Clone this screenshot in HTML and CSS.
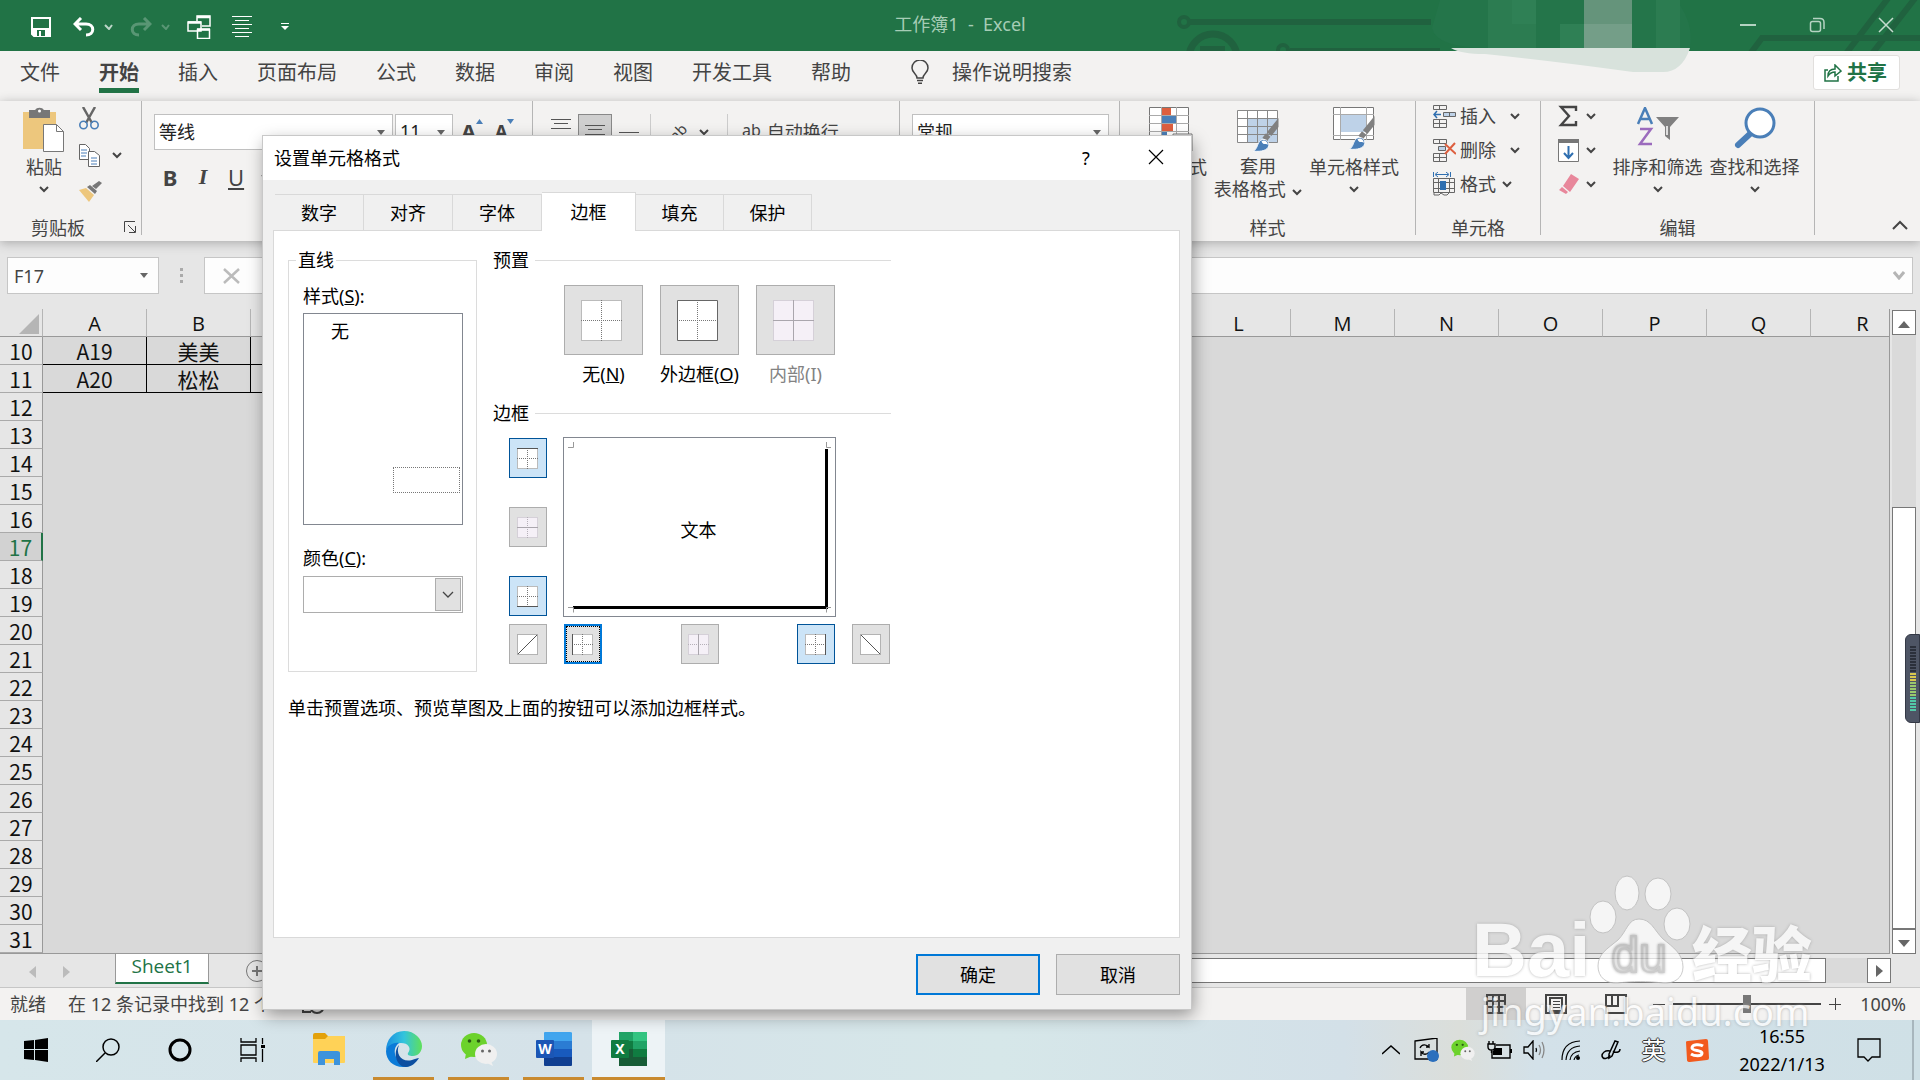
FILE: index.html
```html
<!DOCTYPE html>
<html lang="zh-CN">
  <head>
    <meta charset="utf-8" />
    <title>工作簿1 - Excel</title>
    <link rel="stylesheet" href="styles.css">
  </head>
  <body>
    <svg class="defs" width="0" height="0">
      <symbol id="chev" viewBox="0 0 10 7"><path d="M1 1l4 4 4-4" fill="none" stroke="#444" stroke-width="2"/></symbol>
      <symbol id="brush" viewBox="0 0 28 38">
        <path d="M28 0v10l-8 10-5-4z" fill="#808080"/>
        <path d="M14 17l5 4-4 5-5-4z" fill="#808080"/>
        <path d="M0 37c5-3 4-9 8-12 5-3 10 1 9 6-1 5-8 7-17 6z" fill="#4a7fb8" stroke="#fff"/>
        <path d="M9 26c3-2 7 0 7 4-2-1-5 1-7-4z" fill="#fff"/>
      </symbol>
      <symbol id="wechat" viewBox="0 0 36 34">
        <ellipse cx="13" cy="13" rx="13" ry="12" fill="#6cd22c"/><path d="M5 21l-1 6 7-3z" fill="#6cd22c"/>
        <circle cx="8.500" cy="9" r="1.800" fill="#2b5a12"/><circle cx="17.500" cy="9" r="1.800" fill="#2b5a12"/>
        <ellipse cx="25" cy="22" rx="11" ry="10" fill="#f0f0f0"/><path d="M30 29l2 5-6-3z" fill="#f0f0f0"/>
        <circle cx="21.500" cy="19" r="1.500" fill="#666"/><circle cx="28.500" cy="19" r="1.500" fill="#666"/>
      </symbol>
      <symbol id="window-base" viewBox="0 0 21 21">
        <path d="M0 0h21v21H0z" fill="#fff"/>
        <path d="M.5.5h20v20H.5zM10.500 0v21M0 10.500h21" fill="none" stroke="#777" stroke-dasharray="1 1"/>
      </symbol>
      <symbol id="window-off" viewBox="0 0 21 21">
        <path d="M0 0h21v21H0z" fill="#f5f0f7"/>
        <path d="M.5.5h20v20H.5zM10.500 0v21M0 10.500h21" fill="none" stroke="#b5b0b8" stroke-dasharray="1 1"/>
      </symbol>
    </svg>

    <div class="app">
      <header class="titlebar">
        <svg class="circuit" width="760" height="51" viewBox="1160 0 760 51" fill="none" stroke="#20623f" stroke-width="6">
          <circle cx="1184" cy="22" r="5" stroke-width="4"/><path d="M1190 22h241"/>
          <circle cx="1213" cy="58" r="24" stroke-width="7"/><path d="M1200 49h25"/>
          <circle cx="1283" cy="50" r="5" stroke-width="4"/><path d="M1290 51h150"/>
          <path d="M1750 54l12-16h160M1845 55l44-58M1871 55l45-58"/>
        </svg>
        <div class="quick">
          <button aria-label="保存"><svg width="20" height="20" viewBox="0 0 20 20"><path d="M1 1h18v18H3l-2-2z" fill="none" stroke="#fff" stroke-width="2"/><path d="M2 11h16v8H2z" fill="#fff"/><path d="M6 13h8v6H6z" fill="#217346"/><path d="M8 14h2v5H8z" fill="#fff"/></svg></button>
          <button aria-label="撤消"><svg width="22" height="20" viewBox="0 0 22 20"><path d="M8 1L2 7l6 6M2 7h11c9 0 9 11 0 11" fill="none" stroke="#fff" stroke-width="3"/></svg></button>
          <button aria-label="撤消列表"><svg width="9" height="6" viewBox="0 0 9 6"><path d="M1 1l4 4 3-4" fill="none" stroke="#bcd6c8" stroke-width="2"/></svg></button>
          <button class="dim" aria-label="恢复"><svg width="22" height="20" viewBox="0 0 22 20"><path d="M14 1l6 6-6 6M20 7H9C0 7 0 18 9 18" fill="none" stroke="#fff" stroke-width="3"/></svg></button>
          <button class="dim" aria-label="恢复列表"><svg width="9" height="6" viewBox="0 0 9 6"><path d="M1 1l4 4 3-4" fill="none" stroke="#fff" stroke-width="2"/></svg></button>
          <button class="q-win" aria-label="切换窗口"><svg width="24" height="24" viewBox="0 0 24 24" fill="none" stroke="#fff"><path d="M10 6V1h13v10h-8M1 7h13v9H1zM10.500 14.500h12v9h-12z" stroke-width="1.500"/><path d="M10 2h13M1 7.500h13M10 14.500h13" stroke-width="2.500"/></svg></button>
          <button class="q-center" aria-label="居中"><svg width="20" height="22" viewBox="0 0 20 22"><path d="M0 .5h20M3 4.500h14M0 8.500h20M3 12.500h14M0 16.500h20M3 20.500h14" stroke="#fff" stroke-width="1"/></svg></button>
          <button class="q-more" aria-label="自定义"><svg width="8" height="8" viewBox="0 0 8 8"><path d="M0 0h8v1H0zM0 3h8L4 7z" fill="#fff"/></svg></button>
        </div>
        <h1>工作簿1&nbsp; -&nbsp; Excel</h1>
        <div class="win-buttons">
          <button aria-label="最小化"><svg width="16" height="16"><path d="M0 8h16" stroke="#b5d3c2" stroke-width="2"/></svg></button>
          <button aria-label="还原"><svg width="16" height="16" fill="none" stroke="#b5d3c2" stroke-width="1.500"><rect x="1.500" y="4.500" width="10" height="10" rx="2"/><path d="M4 1.500h7q4 0 4 4V12"/></svg></button>
          <button aria-label="关闭"><svg width="16" height="16"><path d="M1 1l14 14M15 1L1 15" stroke="#c5dccf" stroke-width="1.500"/></svg></button>
        </div>
      </header>

      <nav class="tabs">
        <a href="#">文件</a>
        <a href="#" class="on">开始</a>
        <a href="#">插入</a>
        <a href="#">页面布局</a>
        <a href="#">公式</a>
        <a href="#">数据</a>
        <a href="#">审阅</a>
        <a href="#">视图</a>
        <a href="#">开发工具</a>
        <a href="#">帮助</a>
        <a href="#" class="tell">
          <svg width="18" height="24" viewBox="0 0 18 24" fill="none" stroke="#444" stroke-width="1.500"><path d="M6 18c0-4-5-5-5-10a8 8 0 0 1 16 0c0 5-5 6-5 10zM6 20.500h6M7 23.200h4"/></svg>
          操作说明搜索
        </a>
        <button class="share">
          <svg width="18" height="18" viewBox="0 0 18 18" fill="none" stroke="#217346" stroke-width="1.500"><path d="M4 6H1v11h13v-5M4 12c0-5 3-7 7-7V1l6 6-6 5V8c-3 0-5 1-7 4z"/></svg>
          共享
        </button>
      </nav>

      <section class="ribbon">
        <div class="group clip">
          <div class="group-body">
            <button class="big">
              <svg width="42" height="46" viewBox="0 0 42 46"><path d="M0 5h33v37H0z" fill="#edc77d"/><path d="M6 3h6a5 4 0 0 1 9 0h6v8H6z" fill="#777"/><circle cx="16.500" cy="4" r="1.500" fill="#fff"/><path d="M20.500 17.500h13l7 7v20h-20z" fill="#fff" stroke="#777"/><path d="M33.500 17.500v7h7" fill="none" stroke="#777"/></svg>
              <span>粘贴</span>
              <svg class="chev"><use href="#chev"/></svg>
            </button>
            <div class="stack">
              <button aria-label="剪切"><svg width="20" height="23" viewBox="0 0 20 23" fill="none"><path d="M4 0l9 16M16 0L7 16" stroke="#666" stroke-width="2.500"/><circle cx="4.500" cy="18" r="3.700" stroke="#4a7fb8" stroke-width="1.600"/><circle cx="15.500" cy="18" r="3.700" stroke="#4a7fb8" stroke-width="1.600"/></svg></button>
              <button aria-label="复制"><svg width="21" height="23" viewBox="0 0 21 23"><path d="M.5.5h6l4 4v11H.5z" fill="#fff" stroke="#666"/><path d="M2 6h6M2 9h6M2 12h5" stroke="#4a7fb8"/><path d="M9.500 7.500h6l5 4v11h-11z" fill="#fff" stroke="#666"/><path d="M12 14h6M12 17h6M12 20h6" stroke="#4a7fb8"/></svg><svg class="chev"><use href="#chev"/></svg></button>
              <button aria-label="格式刷"><svg width="23" height="21" viewBox="0 0 23 21"><path d="M0 9l7-2 8 7-5 7z" fill="#edc77d"/><path d="M8 6l3-2 7 6-2 3zM13 5l7-5 3 2-6 6z" fill="#777"/></svg></button>
            </div>
          </div>
          <div class="group-name">剪贴板
            <svg width="12" height="12" viewBox="0 0 12 12" fill="none" stroke="#444"><path d="M.5 11V.5H11M4 4l7 7M11.500 5v6.500H5"/></svg>
          </div>
        </div>
        <div class="group font">
          <div class="line">
            <input class="combo face" type="text" value="等线" aria-label="字体" />
            <input class="combo size" type="text" value="11" aria-label="字号" />
            <button class="grow">A<svg width="7" height="5"><path d="M0 5l3.500-5L7 5z" fill="#4a7fb8"/></svg></button>
            <button class="grow small">A<svg width="7" height="5"><path d="M0 0l3.500 5L7 0z" fill="#4a7fb8"/></svg></button>
          </div>
          <div class="line biu">
            <button><b>B</b></button>
            <button><i>I</i></button>
            <button><u>U</u></button>
            <svg class="chev"><use href="#chev"/></svg>
          </div>
        </div>
        <div class="group align">
          <div class="line">
            <button aria-label="顶端对齐"><svg width="20" height="24"><path d="M0 5.500h20M3 9.500h14M0 14.500h20" stroke="#555"/></svg></button>
            <button class="pressed" aria-label="垂直居中"><svg width="20" height="24"><path d="M0 10.500h20M3 14.500h14M0 19.500h20" stroke="#555"/></svg></button>
            <button aria-label="底端对齐"><svg width="20" height="24"><path d="M0 18.500h20M3 22.500h14" stroke="#555"/></svg></button>
            <button class="orient"><span>ab</span><svg class="chev"><use href="#chev"/></svg></button>
            <button class="wrap"><span>ab</span>自动换行</button>
          </div>
        </div>
        <div class="group number">
          <div class="line"><input class="combo" type="text" value="常规" aria-label="数字格式" /></div>
        </div>
        <div class="group looks">
          <div class="group-body">
            <button class="big">
              <svg width="44" height="46" viewBox="0 0 44 46"><path d="M.5.500h39v42H.5z" fill="#fff" stroke="#777"/><path d="M0 8.500h40M0 16.500h40M0 24.500h40M0 32.500h40M12.500 0v43M27.500 0v43" stroke="#aaa"/><path d="M13 1h9v7h-9zM13 17h11v7H13z" fill="#dd5f3f"/><path d="M13 9h14v7H13zM13 25h5v7h-5z" fill="#4a7fb8"/><path d="M24 27h19v17H24z" fill="#fff" stroke="#777"/></svg>
              <span>条件格式</span>
            </button>
            <button class="big table-style">
              <svg width="42" height="46" viewBox="0 0 42 46"><path d="M.5 3.500h40v32H.5z" fill="#fff"/><path d="M11 11h30v25H11z" fill="#bed2e8"/><path d="M.5 3.500h40v32H.5zM0 11.500h40M0 19.500h40M0 27.500h40M10.500 3v33M20.500 3v33M30.500 3v33" fill="none" stroke="#888"/><use href="#brush" x="14" y="11" width="30" height="34"/></svg>
              <span>套用<br />表格格式 <svg class="chev"><use href="#chev"/></svg></span>
            </button>
            <button class="big">
              <svg width="42" height="46" viewBox="0 0 42 46"><path d="M.5.500h40v32H.5z" fill="#fff" stroke="#777"/><path d="M0 7.500h41M0 28.500h41M7.500 0v33M33.500 0v33" stroke="#aaa"/><path d="M8 8h25v17H8z" fill="#bed2e8"/><use href="#brush" x="14" y="9" width="30" height="34"/></svg>
              <span>单元格样式</span>
              <svg class="chev"><use href="#chev"/></svg>
            </button>
          </div>
          <div class="group-name">样式</div>
        </div>
        <div class="group cells">
          <div class="group-body rows">
            <button><svg width="23" height="23" viewBox="0 0 23 23" fill="none" stroke="#666"><path d="M.5.500h13v4H.5zM6.500 0v5M.5 14.500h13v8H.5zM6.500 14v9M0 18.500h13"/><path d="M10.500 7.500h12v4h-12zM16.500 7v5" fill="#bed2e8"/><path d="M8 9.500H1M4 6L1 9.500 4 13" stroke="#2f6fb0" stroke-width="1.500"/></svg><span>插入</span><svg class="chev"><use href="#chev"/></svg></button>
            <button><svg width="23" height="23" viewBox="0 0 23 23" fill="none" stroke="#666"><path d="M.5.500h13v4H.5zM6.500 0v5M.5 14.500h13v8H.5zM6.500 14v9M0 18.500h13"/><path d="M5.500 7.500h7v4h-7z" fill="#bed2e8"/><path d="M12 5l11 10M22 4L12 15" stroke="#dd5f3f" stroke-width="2"/></svg><span>删除</span><svg class="chev"><use href="#chev"/></svg></button>
            <button class="tight"><svg width="23" height="24" viewBox="0 0 23 24" fill="none" stroke="#666"><path d="M.5 6.500h21v14H.5zM5.500 6v15M16.500 6v15M0 10.500h22M0 16.500h22M1 21v2h5l2-2 3 2h3l2-2"/><path d="M7 9h6v9H7z" fill="#2f6fb0" stroke="none"/><path d="M.5 0v5M17.500 0v5M3 2.500h12M5 0L2 2.500 5 5M13 0l3 2.500L13 5" stroke="#2f6fb0"/></svg><span>格式</span><svg class="chev"><use href="#chev"/></svg></button>
          </div>
          <div class="group-name">单元格</div>
        </div>
        <div class="group edit">
          <div class="group-body">
            <div class="rows">
              <button aria-label="求和"><svg width="22" height="22" viewBox="0 0 22 22"><path d="M18 6V2H3l8 9-8 9h15v-4" fill="none" stroke="#444" stroke-width="2.400"/></svg><svg class="chev"><use href="#chev"/></svg></button>
              <button aria-label="填充"><svg width="22" height="23" viewBox="0 0 22 23"><path d="M.5.500h20v22H.5z" fill="#fff" stroke="#777"/><path d="M0 0h21v4H0z" fill="#777"/><path d="M10.500 7v12M6 14l4.500 5 4.500-5" fill="none" stroke="#2f6fb0" stroke-width="2"/></svg><svg class="chev"><use href="#chev"/></svg></button>
              <button aria-label="清除"><svg width="22" height="20" viewBox="0 0 22 20"><path d="M13 0l8 5-9 13-7-6zM4 13l6 5-2 2-7-4z" fill="#e8879b"/></svg><svg class="chev"><use href="#chev"/></svg></button>
            </div>
            <button class="big">
              <svg width="44" height="46" viewBox="0 0 44 46" fill="none" stroke-width="2.500"><path d="M2 17L9 1l7 16M5 12h8" stroke="#4a7fb8"/><path d="M4 22h11L4 37h12" stroke="#9b6bbd"/><path d="M20 10h23l-9 10v13l-5-4v-9z" fill="#808080"/><path d="M31 19v9" stroke="#fff" stroke-width="1.500"/></svg>
              <span>排序和筛选</span>
              <svg class="chev"><use href="#chev"/></svg>
            </button>
            <button class="big">
              <svg width="42" height="46" viewBox="0 0 42 46" fill="none" stroke="#4a7fb8"><path d="M17 26L4 38" stroke-width="6" stroke-linecap="round"/><circle cx="26" cy="16" r="14" fill="#fff" stroke-width="3"/></svg>
              <span>查找和选择</span>
              <svg class="chev"><use href="#chev"/></svg>
            </button>
          </div>
          <div class="group-name">编辑</div>
        </div>
        <button class="collapse" aria-label="折叠功能区"><svg width="16" height="10"><path d="M1 9l7-7 7 7" fill="none" stroke="#444" stroke-width="2"/></svg></button>
      </section>

      <section class="formula">
        <input class="name-box" type="text" value="F17" aria-label="名称框" />
        <svg width="3" height="15"><path d="M0 0h3v3H0zM0 6h3v3H0zM0 12h3v3H0z" fill="#aaa"/></svg>
        <div class="fx">
          <svg width="18" height="16"><path d="M1 1l15 14M16 1L1 15" stroke="#bbb" stroke-width="2.500"/></svg>
          <input type="text" aria-label="编辑栏" />
          <svg width="12" height="9"><path d="M1 1l5 6 5-6" fill="none" stroke="#b5b5b5" stroke-width="3"/></svg>
        </div>
      </section>

      <main class="sheet">
        <div class="cells-wrap">
          <table>
            <colgroup><col class="c-num" /><col span="18" class="c-col" /></colgroup>
            <thead>
              <tr><th class="corner"><svg width="20" height="20"><path d="M20 0v20H0z" fill="#b5b5b5"/></svg></th><th>A</th><th>B</th><th>C</th><th>D</th><th>E</th><th>F</th><th>G</th><th>H</th><th>I</th><th>J</th><th>K</th><th>L</th><th>M</th><th>N</th><th>O</th><th>P</th><th>Q</th><th>R</th></tr>
            </thead>
            <tbody>
              <tr><th>10</th><td class="box">A19</td><td class="box">美美</td><td class="box"></td><td colspan="15"></td></tr>
              <tr><th>11</th><td class="box">A20</td><td class="box">松松</td><td class="box"></td><td colspan="15"></td></tr>
              <tr><th>12</th><td colspan="18"></td></tr>
              <tr><th>13</th><td colspan="18"></td></tr>
              <tr><th>14</th><td colspan="18"></td></tr>
              <tr><th>15</th><td colspan="18"></td></tr>
              <tr><th>16</th><td colspan="18"></td></tr>
              <tr><th class="current">17</th><td colspan="18"></td></tr>
              <tr><th>18</th><td colspan="18"></td></tr>
              <tr><th>19</th><td colspan="18"></td></tr>
              <tr><th>20</th><td colspan="18"></td></tr>
              <tr><th>21</th><td colspan="18"></td></tr>
              <tr><th>22</th><td colspan="18"></td></tr>
              <tr><th>23</th><td colspan="18"></td></tr>
              <tr><th>24</th><td colspan="18"></td></tr>
              <tr><th>25</th><td colspan="18"></td></tr>
              <tr><th>26</th><td colspan="18"></td></tr>
              <tr><th>27</th><td colspan="18"></td></tr>
              <tr><th>28</th><td colspan="18"></td></tr>
              <tr><th>29</th><td colspan="18"></td></tr>
              <tr><th>30</th><td colspan="18"></td></tr>
              <tr><th>31</th><td colspan="18"></td></tr>
            </tbody>
          </table>
        </div>
        <div class="vscroll">
          <button aria-label="向上"><svg width="12" height="7"><path d="M0 7l6-7 6 7z" fill="#666"/></svg></button>
          <div class="track"><div class="thumb"></div></div>
          <button aria-label="向下"><svg width="12" height="7"><path d="M0 0l6 7 6-7z" fill="#666"/></svg></button>
        </div>
      </main>

      <div class="sheet-tabs">
        <button aria-label="上一个"><svg width="7" height="12"><path d="M7 0v12L0 6z" fill="#bbb"/></svg></button>
        <button aria-label="下一个"><svg width="7" height="12"><path d="M0 0v12l7-6z" fill="#bbb"/></svg></button>
        <a href="#" class="sheet-tab">Sheet1</a>
        <button class="add" aria-label="新工作表"><svg width="24" height="24" fill="none" stroke="#777"><circle cx="12" cy="12" r="10.500"/><path d="M12 7v10M7 12h10" stroke-width="2"/></svg></button>
        <div class="hscroll"><div class="thumb"></div><button aria-label="向右"><svg width="7" height="12"><path d="M0 0v12l7-6z" fill="#666"/></svg></button></div>
      </div>

      <footer class="status">
        <span>就绪</span>
        <span>在 12 条记录中找到 12 个</span>
        <svg class="macro" width="24" height="20" fill="none" stroke="#444" stroke-width="2"><path d="M1 3h18M1 3v15h8"/><circle cx="15" cy="12" r="7"/><circle cx="15" cy="12" r="2"/></svg>
        <div class="views">
          <button class="on" aria-label="普通"><svg width="20" height="20" fill="none" stroke="#444" stroke-width="2"><path d="M1 1h18v18H1zM7 1v18M13 1v18M1 7h18M1 13h18"/></svg></button>
          <button aria-label="页面布局"><svg width="22" height="20" fill="none" stroke="#444" stroke-width="2"><path d="M1 1h20v18H1zM5 4h12v13H5z"/><path d="M8 7.500h7M8 10.500h7M8 13.500h7" stroke-width="1"/></svg></button>
          <button aria-label="分页预览"><svg width="22" height="20" fill="none" stroke="#444" stroke-width="2"><path d="M1 1h20v18H1zM7 1v11M13 1v11H1"/></svg></button>
        </div>
        <button class="zoom-btn" aria-label="缩小"><svg width="12" height="12"><path d="M0 6.500h12" stroke="#444"/></svg></button>
        <input class="zoom" type="range" min="0" max="100" value="50" aria-label="缩放" />
        <button class="zoom-btn" aria-label="放大"><svg width="12" height="12"><path d="M0 6.500h12M6.500 0v12" stroke="#444"/></svg></button>
        <span class="percent">100%</span>
      </footer>

      <div class="taskbar">
        <button class="sys" aria-label="开始"><svg width="24" height="24"><path d="M0 3l10-1v9H0zM11 2l13-2v11H11zM0 12h10v10L0 21zM11 12h13v12l-13-2z"/></svg></button>
        <button class="sys" aria-label="搜索"><svg width="24" height="24" fill="none" stroke="#000" stroke-width="1.500"><circle cx="15" cy="9" r="8"/><path d="M9 15l-9 9"/></svg></button>
        <button class="sys" aria-label="Cortana"><svg width="24" height="24" fill="none" stroke="#000" stroke-width="3"><circle cx="12" cy="12" r="10"/></svg></button>
        <button class="sys" aria-label="任务视图"><svg width="25" height="24" fill="none" stroke="#000" stroke-width="1.300"><path d="M1 0v4h15V0M1 7h15v10H1zM1 24v-4h15v4M22.500 0v6M22.500 11v13"/><path d="M21 7h4v3h-4z" fill="#000" stroke="none"/></svg></button>
        <div class="apps">
          <button aria-label="文件资源管理器"><svg width="32" height="32"><path d="M0 2q0-2 2-2h10l3 3h15q2 0 2 2v20H0z" fill="#e3a10b"/><path d="M0 6h12l3-3h17v26q0 1-1 1H1q-1 0-1-1z" fill="#ffd257"/><path d="M5 32V20q0-2 2-2h17q3 0 3 2v12h-6v-6h-9v6z" fill="#3d93dc"/></svg></button>
          <button class="open" aria-label="Edge">
            <svg width="36" height="36" viewBox="0 0 36 36">
              <defs><linearGradient id="edge" x1="0" x2="1"><stop offset="0" stop-color="#1a8fe0"/><stop offset=".5" stop-color="#33c4dd"/><stop offset="1" stop-color="#5fe05a"/></linearGradient></defs>
              <path d="M18 0c11 0 18 8 18 15 0 6-4 10-9 10-4 0-6-1-5-3 4-5 0-10-7-10C7 12 1 16 0 20 0 9 7 0 18 0z" fill="url(#edge)"/>
              <path d="M0 20c1-5 7-9 13-8-5 4-5 9-3 14 3 6 9 9 15 8-3 2-5 2-8 2C7 36 0 29 0 20z" fill="#0b7bd8"/>
              <path d="M13 14c-4 9 3 18 13 15 3-1 5-2 7-2-3 5-8 9-13 9-9 0-14-14-7-22z" fill="#0d4fa0"/>
            </svg>
          </button>
          <button class="open" aria-label="微信"><svg width="36" height="34"><use href="#wechat"/></svg></button>
          <button class="open" aria-label="Word"><svg width="36" height="34"><path d="M8 1q0-1 1-1h25q2 0 2 1v8H8z" fill="#41a5ee"/><path d="M8 9h28v8H8z" fill="#2b7cd3"/><path d="M8 17h28v8H8z" fill="#185abd"/><path d="M8 25h28v8q0 1-1 1H9q-1 0-1-1z" fill="#103f91"/><rect y="8" width="18" height="18" rx="1" fill="#1b56b5"/><text x="9" y="22" class="logo">W</text></svg></button>
          <button class="open active" aria-label="Excel"><svg width="36" height="34"><path d="M8 0h28v9H8z" fill="#21a366"/><path d="M22 0h14v9H22z" fill="#33c481"/><path d="M8 9h14v8H8zM22 17h14v8H22z" fill="#107c41"/><path d="M22 9h14v8H22z" fill="#21a366"/><path d="M8 17h14v8H8zM8 25h28v9H8z" fill="#185c37"/><rect y="8" width="18" height="18" rx="1" fill="#107c41"/><text x="9" y="22" class="logo">X</text></svg></button>
        </div>
        <div class="tray">
          <button aria-label="显示隐藏的图标"><svg width="18" height="10"><path d="M0 9l9-8 9 8" fill="none" stroke="#000" stroke-width="1.500"/></svg></button>
          <button aria-label="更新"><svg width="26" height="24" fill="none" stroke="#000" stroke-width="1.300"><path d="M1 3l22-3v21H1zM6 10c2-5 7-3 9-1V6M15 9h-3M15 14c-2 3-6 3-8 0v4M7 14h3"/><circle cx="19" cy="18" r="6" fill="#2b6fbd" stroke="none"/></svg></button>
          <button aria-label="微信"><svg width="24" height="22"><use href="#wechat"/></svg></button>
          <button aria-label="电源"><svg width="25" height="18" fill="none" stroke="#000" stroke-width="1.400"><path d="M9 4h14v13H5v-7M24.300 8v4M2 0v3M6 0v3M1 3h7v3q0 3-3.500 3T1 6zM4.500 9v3"/><path d="M8 7h7v7H6v-4z" fill="#000" stroke="none"/></svg></button>
          <button aria-label="音量"><svg width="24" height="20" fill="none" stroke="#000" stroke-width="1.300"><path d="M1 7h4l5-6v18l-5-6H1z"/><path d="M13 8q1 2 0 4"/><path d="M16 5q3 5 0 10M19 2q4 8 0 16" stroke="#888"/></svg></button>
          <button aria-label="网络"><svg width="20" height="20" fill="none" stroke="#000" stroke-width="1.200"><path d="M1 20Q1 2 19 1M5 20Q6 7 19 6M9 20q1-8 10-9M13 20q1-4 5-5"/><circle cx="17" cy="18" r="2" fill="#000" stroke="none"/></svg></button>
          <button class="wide" aria-label="手写"><svg width="20" height="20" fill="none" stroke="#000" stroke-width="1.500"><path d="M8 14L14 1l3 1-6 14-3 2zM9 11c-5-1-8 2-8 5 1 4 6 3 8-1M12 11c2 2 7 2 7-2"/></svg></button>
          <button class="wide ime">英</button>
          <button class="wide" aria-label="搜狗输入法"><svg width="24" height="23"><path d="M1 3q0-1 2-1l18-2q2 0 2 2l1 17q0 2-2 2L5 23q-3 0-3-2z" fill="#f25a1d"/><path d="M18 7c-3-2-11-2-11 2 0 3 10 2 10 5 0 4-8 3-11 1" fill="none" stroke="#fff" stroke-width="3"/></svg></button>
          <div class="clock">16:55<br />2022/1/13</div>
          <button class="note" aria-label="通知"><svg width="24" height="24" fill="none" stroke="#000" stroke-width="1.300"><path d="M1 1h22v18h-8l-4 4-4-4H1z"/></svg></button>
        </div>
      </div>
    </div>

    <div class="dialog" role="dialog" aria-labelledby="dlg-title">
      <div class="dlg-head">
        <h2 id="dlg-title">设置单元格格式</h2>
        <button>?</button>
        <button aria-label="关闭"><svg width="16" height="16"><path d="M1 1l14 14M15 1L1 15" stroke="#000" stroke-width="1.200"/></svg></button>
      </div>
      <div class="dlg-tabs">
        <button>数字</button>
        <button>对齐</button>
        <button>字体</button>
        <button class="on">边框</button>
        <button>填充</button>
        <button>保护</button>
      </div>
      <div class="dlg-page">
        <div class="dlg-cols">
          <fieldset>
            <legend>直线</legend>
            <div class="field-label" id="style-label">样式(<u>S</u>):</div>
            <ul class="line-styles" role="listbox" aria-labelledby="style-label">
              <li>无</li>
              <li class="focus"></li>
            </ul>
            <label class="field-label" for="color">颜色(<u>C</u>):</label>
            <div class="color-box">
              <select id="color"><option></option></select>
              <span><svg width="12" height="8"><path d="M1 1l5 5 5-5" fill="none" stroke="#444" stroke-width="1.300"/></svg></span>
            </div>
          </fieldset>

          <div class="borders">
            <h3>预置</h3>
            <div class="presets">
              <div>
                <button id="p-none"><svg width="41" height="41"><path d="M0 0h41v41H0z" fill="#fff"/><path d="M.5.500h40v40H.5zM20.500 0v41M0 20.500h41" fill="none" stroke="#777" stroke-dasharray="1 1"/></svg></button>
                <label for="p-none">无(<u>N</u>)</label>
              </div>
              <div>
                <button id="p-out"><svg width="41" height="41"><path d="M.5.500h40v40H.5z" fill="#fff" stroke="#666"/><path d="M20.500 2v37M2 20.500h37" stroke="#777" stroke-dasharray="1 1"/></svg></button>
                <label for="p-out">外边框(<u>O</u>)</label>
              </div>
              <div class="off">
                <button id="p-in" disabled><svg width="41" height="41"><path d="M0 0h41v41H0z" fill="#f5f0f7"/><path d="M.5.500h40v40H.5z" fill="none" stroke="#b5b0b8" stroke-dasharray="1 1"/><path d="M20.500 0v41M0 20.500h41" stroke="#aaa6ad"/></svg></button>
                <label for="p-in">内部(I)</label>
              </div>
            </div>
            <h3>边框</h3>
            <div class="editor">
              <div class="side">
                <button class="on" aria-label="上边框"><svg width="21" height="21"><use href="#window-base"/><path d="M0 .5h21" stroke="#555"/></svg></button>
                <button disabled aria-label="内部横线"><svg width="21" height="21"><use href="#window-off"/><path d="M0 10.500h21" stroke="#aaa6ad"/></svg></button>
                <button class="on" aria-label="下边框"><svg width="21" height="21"><use href="#window-base"/><path d="M0 20.500h21" stroke="#555"/></svg></button>
              </div>
              <div class="preview">
                文本
                <svg width="271" height="178" fill="none" stroke="#999">
                  <path d="M4 9.500h5.500V4M262.500 4v5.500H267"/>
                  <path d="M262.500 11v160M9 169.500h255" stroke="#000" stroke-width="3"/>
                  <path d="M4 169.500h5.500v5M267 169.500h-4.500v5"/>
                </svg>
              </div>
              <button aria-label="左斜线"><svg width="21" height="21"><path d="M.5.500h20v20H.5z" fill="#fff" stroke="#777" stroke-dasharray="1 1"/><path d="M1 20L20 1" stroke="#555"/></svg></button>
              <div class="bottom">
                <button class="focused" aria-label="左边框"><svg width="21" height="21"><use href="#window-base"/><path d="M.5 0v21" stroke="#555"/></svg></button>
                <button disabled aria-label="内部竖线"><svg width="21" height="21"><use href="#window-off"/><path d="M10.500 0v21" stroke="#aaa6ad"/></svg></button>
                <button class="on" aria-label="右边框"><svg width="21" height="21"><use href="#window-base"/><path d="M20.500 0v21" stroke="#555"/></svg></button>
              </div>
              <button aria-label="右斜线"><svg width="21" height="21"><path d="M.5.500h20v20H.5z" fill="#fff" stroke="#777" stroke-dasharray="1 1"/><path d="M1 1l19 19" stroke="#555"/></svg></button>
            </div>
          </div>
        </div>
        <p>单击预置选项、预览草图及上面的按钮可以添加边框样式。</p>
      </div>
      <div class="dlg-foot">
        <button class="ok">确定</button>
        <button>取消</button>
      </div>
    </div>

    <!-- blurred account name in the title bar -->
    <svg class="smudge" width="270" height="74" viewBox="1425 0 270 74">
      <path d="M1440 0h236q18 22 14 48h-200q-54 0-58-20z" fill="#24754a"/>
      <path d="M1488 0h48v48h-48zM1656 0h24v48h-24z" fill="#2c7c51"/>
      <path d="M1512 0h24v24h-24zM1560 24h24v24h-24z" fill="#2f8055"/>
      <path d="M1584 0h48v24h-48z" fill="#65947b"/>
      <path d="M1584 24h48v24h-48z" fill="#749e88"/>
      <path d="M1451 48h239q-8 24-27 24h-30q-80-11-148-18-24 0-34-6z" fill="#d8e2dc"/>
    </svg>

    <div class="meter">
      <i></i><i></i><i></i><i></i><i></i><i></i><i></i><i></i><i></i><i class="y"></i><i class="y"></i><i class="y"></i><i class="g"></i><i class="g"></i><i class="g"></i><i class="g"></i><i class="g"></i><i class="t"></i><i class="t"></i><i class="t"></i><i class="t"></i><i class="t"></i>
    </div>

    <div class="watermark">
      <div class="wm-logo">
        <span class="bai">Bai</span>
        <svg width="104" height="112" viewBox="1590 874 104 112">
          <g fill="#fff" stroke="#bbb" stroke-width="1">
            <ellipse cx="1605" cy="918" rx="13" ry="16"/><ellipse cx="1629" cy="894" rx="12" ry="17"/>
            <ellipse cx="1660" cy="895" rx="13" ry="16"/><ellipse cx="1679" cy="925" rx="13" ry="16"/>
            <path d="M1641 920c12 0 15 11 24 20 10 8 20 15 20 28 0 11-9 17-20 16-16-2-30-2-45 0-12 1-20-6-20-17 0-12 9-17 20-26 9-9 10-21 21-21z"/>
          </g>
          <text x="1641" y="973" class="du">du</text>
        </svg>
        <span class="jy">经验</span>
      </div>
      <div class="wm-url">jingyan.baidu.com</div>
    </div>
  </body>
</html>
```
FILE: styles.css
```css
* {
  box-sizing: border-box;
}
body {
  margin: 0;
  font-family: "Noto Sans", "Noto Sans CJK SC", sans-serif;
  font-size: 18px;
  line-height: 24px;
  color: #444;
  overflow: hidden;
}
button {
  border: 0;
  padding: 0;
  background: none;
  font: inherit;
  color: inherit;
}
input,
select {
  font: inherit;
  color: inherit;
}
a {
  color: inherit;
  text-decoration: none;
}
svg {
  flex: none;
}
h1,
h2,
h3,
p,
ul {
  margin: 0;
  padding: 0;
  font-size: 18px;
  font-weight: normal;
}
.defs {
  position: absolute;
}
.app {
  display: flex;
  flex-direction: column;
  min-height: 100vh;
  background: #e6e6e6;
}
.chev {
  width: 10px;
  height: 7px;
}

/* title bar */
.titlebar {
  position: relative;
  display: grid;
  grid-template-columns: 1fr auto 1fr;
  align-items: center;
  height: 51px;
  background: #217346;
  color: #a6cdb6;
}
.circuit {
  position: absolute;
  right: 0;
  top: 0;
}
.quick,
.win-buttons {
  display: flex;
  align-items: center;
  position: relative;
}
.quick {
  padding: 2px 0 0 31px;
}
.quick button {
  display: flex;
  margin-right: 9px;
}
.quick button:first-child {
  margin-right: 22px;
}
.quick button:nth-child(3) {
  margin-right: 17px;
}
.quick .dim {
  opacity: 0.25;
}
.quick .q-win {
  margin: 0 21px 0 8px;
}
.quick .q-more {
  margin-left: 20px;
}
.titlebar h1 {
  position: relative;
  padding-bottom: 4px;
  white-space: nowrap;
}
.win-buttons {
  justify-content: flex-end;
}
.win-buttons button {
  width: 69px;
  height: 50px;
}

/* ribbon */
.tabs {
  display: flex;
  align-items: flex-start;
  gap: 39px;
  height: 50px;
  padding: 4px 20px 0;
  background: #f3f2f1;
  font-size: 20px;
}
.tabs a {
  line-height: 35px;
  height: 38px;
}
.tabs .on {
  font-weight: bold;
  border-bottom: 5px solid #217346;
}
.tabs .tell {
  display: flex;
  align-items: center;
  gap: 23px;
  margin-left: 21px;
  height: 34px;
}
.share {
  display: flex;
  align-items: center;
  gap: 5px;
  height: 35px;
  margin-left: auto;
  padding: 0 12px 0 10px;
  border: 1px solid #e1dfdd;
  border-radius: 3px;
  background: #fff;
  color: #217346;
  font-weight: bold;
}
.ribbon {
  display: flex;
  height: 140px;
  padding-bottom: 6px;
  background: #f3f2f1;
  box-shadow: 0 2px 10px #aaa;
  z-index: 1;
}
.group {
  flex: none;
  border-right: 1px solid #b5b5b5;
}
.group-body {
  display: flex;
  height: 120px;
}
.group-name {
  line-height: 14px;
  text-align: center;
}
.big {
  display: flex;
  flex-direction: column;
  align-items: center;
  padding-top: 6px;
}
.big > span {
  margin-top: 2px;
  white-space: nowrap;
}
.big > .chev {
  margin-top: 7px;
}
.clip {
  width: 142px;
}
.clip .big {
  margin-left: 21px;
  width: 46px;
}
.clip .group-name {
  display: flex;
  justify-content: flex-end;
  gap: 39px;
  padding-right: 5px;
}
.stack {
  display: flex;
  flex-direction: column;
  gap: 14px;
  padding: 6px 0 0 12px;
}
.stack button {
  display: flex;
  align-items: center;
  gap: 12px;
}
.line {
  display: flex;
  padding-top: 13px;
}
.combo {
  width: 100%;
  height: 36px;
  padding: 0 4px 2px;
  border: 1px solid #c0c0c0;
  background: #fff url("data:image/svg+xml,%3Csvg xmlns='http://www.w3.org/2000/svg' width='8' height='5'%3E%3Cpath d='M0 0h8L4 5z' fill='%23666'/%3E%3C/svg%3E") no-repeat right 7px center;
  color: #222;
}
.font {
  width: 391px;
  padding-left: 12px;
}
.combo.face {
  width: 239px;
}
.combo.size {
  width: 58px;
  margin-left: 2px;
}
.grow {
  display: flex;
  align-items: flex-start;
  width: 34px;
  padding: 5px 0 0 8px;
  font-size: 22px;
  font-weight: bold;
}
.grow.small {
  font-size: 18px;
}
.biu {
  align-items: center;
  gap: 17px;
  padding: 15px 0 0 8px;
  font-size: 22px;
}
.biu button {
  width: 16px;
}
.biu button:nth-child(2) {
  font-family: "Liberation Serif", serif;
  font-weight: bold;
}
.align {
  width: 367px;
}
.align .line {
  padding: 13px 0 0 11px;
}
.align button {
  display: flex;
  width: 34px;
  height: 36px;
  justify-content: center;
}
.align .pressed {
  border: 1px solid #888;
  background: #cfcfcf;
}
.align .orient {
  width: 78px;
  align-items: center;
  gap: 12px;
  margin-left: 4px;
  border: solid #ccc;
  border-width: 0 1px;
}
.orient span {
  font-size: 15px;
  transform: rotate(-45deg);
}
.align .wrap {
  width: 140px;
  align-items: center;
  justify-content: flex-start;
  gap: 6px;
  padding-left: 14px;
}
.wrap span {
  font-size: 16px;
  height: 28px;
}
.number {
  width: 220px;
  padding: 0 10px 0 12px;
}
.looks {
  width: 296px;
}
.looks .group-body {
  gap: 7px;
  padding-left: 15px;
}
.looks .table-style > span {
  line-height: 23px;
}
.looks .table-style {
  width: 88px;
}
.table-style .chev {
  margin-left: 2px;
}
.cells {
  width: 125px;
}
.cells .group-body,
.edit .rows {
  display: flex;
  flex-direction: column;
  gap: 10px;
  padding: 3px 0 0 17px;
}
.rows button {
  display: flex;
  align-items: center;
  height: 24px;
  gap: 4px;
}
.rows .chev {
  margin-left: 10px;
}
.rows .tight .chev {
  margin-left: 2px;
}
.edit {
  width: 274px;
}
.edit .rows .chev {
  margin-left: 2px;
}
.edit .big {
  width: 97px;
}
.edit .rows + .big {
  margin-left: 13px;
}
.collapse {
  align-self: flex-end;
  margin: 0 12px 0 auto;
}

/* formula bar */
.formula {
  display: flex;
  align-items: center;
  gap: 21px;
  height: 68px;
  padding: 1px 7px 0;
}
.name-box,
.fx {
  height: 37px;
  border: 1px solid #c6c6c6;
  background: #fdfdfd;
}
.name-box {
  width: 152px;
  padding: 0 6px;
  background: #fdfdfd url("data:image/svg+xml,%3Csvg xmlns='http://www.w3.org/2000/svg' width='8' height='5'%3E%3Cpath d='M0 0h8L4 5z' fill='%23666'/%3E%3C/svg%3E") no-repeat right 10px center;
}
.fx {
  display: flex;
  flex: 1;
  align-items: center;
  padding: 0 7px 0 18px;
}
.fx input {
  flex: 1;
  border: 0;
  background: none;
}

/* grid */
.sheet {
  display: flex;
  flex: 1;
}
.cells-wrap {
  flex: 1;
  min-width: 0;
  overflow: hidden;
  border-right: 1px solid #999;
  border-bottom: 1px solid #999;
  background: #d9d9d9;
}
table {
  width: 1915px;
  table-layout: fixed;
  border-collapse: separate;
  border-spacing: 0;
  font-family: "Noto Sans CJK SC", sans-serif;
  font-size: 21px;
  line-height: 26px;
  color: #111;
}
.c-num {
  width: 43px;
}
.c-col {
  width: 104px;
}
th,
td {
  height: 28px;
  padding: 1px 0 0;
  text-align: center;
  font-weight: normal;
}
th {
  border-right: 1px solid #999;
  border-bottom: 1px solid #aaa;
  background: #e6e6e6;
}
thead th {
  border-right-color: #b5b5b5;
  border-bottom-color: #999;
  padding-top: 2px;
  font-family: "Open Sans", sans-serif;
  font-size: 20px;
  line-height: 20px;
}
.corner {
  padding-right: 3px;
}
.corner svg {
  display: block;
  margin-left: auto;
}
.current {
  background: #d2d2d2;
  color: #217346;
  border-right: 2px solid #217346;
}
.box {
  border-right: 1px solid #000;
  border-bottom: 1px solid #000;
}
.vscroll {
  display: flex;
  flex-direction: column;
  width: 30px;
  padding: 1px 4px 0 2px;
}
.vscroll button,
.hscroll button {
  width: 24px;
  height: 25px;
  border: 1px solid #777;
  background: #fff;
  line-height: 8px;
}
.track {
  display: flex;
  flex: 1;
  flex-direction: column;
  justify-content: flex-end;
  background: #dadada;
}
.track .thumb {
  height: 71%;
  border: 1px solid #777;
  background: #fff;
}
.sheet-tabs {
  display: flex;
  align-items: flex-start;
  height: 34px;
  border-bottom: 1px solid #c6c6c6;
}
.sheet-tabs > button {
  width: 34px;
  height: 34px;
}
.sheet-tabs > button:first-child {
  margin-left: 15px;
}
.sheet-tab {
  width: 94px;
  height: 30px;
  margin-left: 32px;
  border: 1px solid #999;
  border-top: 0;
  border-bottom: 2px solid #217346;
  background: #fff;
  color: #217346;
  text-align: center;
  font-family: "Open Sans", sans-serif;
  font-size: 19px;
}
.sheet-tabs .add {
  display: flex;
  align-items: center;
  margin-left: 36px;
}
.hscroll {
  display: flex;
  width: 700px;
  margin: 4px 29px 0 auto;
  background: #dadada;
}
.hscroll .thumb {
  flex: 1;
  margin-right: 41px;
  border: 1px solid #777;
  background: #fff;
}

.status {
  display: flex;
  align-items: center;
  height: 32px;
  padding: 0 14px 0 10px;
  background: #f3f2f1;
}
.status > span {
  margin-right: 22px;
}
.macro {
  margin-left: 8px;
}
.views {
  display: flex;
  margin-left: auto;
  margin-right: 7px;
  align-self: stretch;
}
.views button {
  display: flex;
  align-items: center;
  justify-content: center;
  width: 60px;
}
.views .on {
  background: #d0cfce;
}
.zoom-btn {
  display: flex;
}
.zoom {
  appearance: none;
  width: 148px;
  height: 20px;
  margin: 0 8px;
  background: linear-gradient(#444, #444) no-repeat center / 100% 2px;
}
.zoom::-webkit-slider-thumb {
  appearance: none;
  width: 8px;
  height: 18px;
  background: #777;
}
.status .percent {
  margin: 0 0 0 19px;
}

/* taskbar */
.taskbar {
  display: flex;
  height: 60px;
  background: linear-gradient(90deg, #d6e6ea, #d5e2e9 30%, #d6e7e9 52%, #d3e0e8 70%, #dbdeda 76%, #d3e1e9 80%, #cfe0e6);
  color: #000;
}
.taskbar button {
  display: flex;
  align-items: center;
  justify-content: center;
}
.sys {
  width: 72px;
}
.apps {
  display: flex;
  margin-left: 3px;
}
.apps button {
  width: 61px;
  margin: 0 7px;
  border-bottom: 3px solid transparent;
}
.apps .open {
  border-bottom-color: #c98a2f;
}
.apps .active {
  width: 73px;
  margin: 0 1px;
  background: #edf3f6;
}
.logo {
  fill: #fff;
  font-size: 14px;
  font-weight: bold;
  text-anchor: middle;
}
.tray {
  display: flex;
  margin: 0 6px 0 auto;
  padding-right: 20px;
  border-right: 2px solid #a8b6bd;
}
.tray button {
  width: 36px;
}
.tray .wide {
  width: 43px;
}
.tray .ime {
  font-size: 24px;
  color: #fff;
  text-shadow: 1px 0 #333, -1px 0 #333, 0 1px #333, 0 -1px #333;
}
.clock {
  width: 128px;
  padding-top: 2px;
  line-height: 28px;
  text-align: center;
}
.tray .note {
  width: 46px;
}

/* format cells dialog */
.dialog {
  position: absolute;
  left: 263px;
  top: 136px;
  z-index: 2;
  width: 928px;
  background: #f0f0f0;
  box-shadow: 0 0 0 1px #c8c8c8, 2px 6px 16px rgba(0, 0, 0, 0.4);
  color: #000;
}
.dlg-head {
  display: flex;
  align-items: center;
  height: 44px;
  padding-left: 11px;
  background: #fff;
}
.dlg-head h2 {
  flex: 1;
}
.dlg-head button {
  width: 70px;
}
.dlg-tabs {
  display: flex;
  align-items: flex-end;
  height: 51px;
  padding-left: 12px;
}
.dlg-tabs button {
  width: 88px;
  height: 37px;
  border: 1px solid #d9d9d9;
  border-width: 1px 1px 0 0;
}
.dlg-tabs button:nth-child(-n + 3) {
  width: 89px;
}
.dlg-tabs .on {
  position: relative;
  width: 94px;
  height: 39px;
  background: #fff;
}
.dlg-page {
  min-height: 708px;
  margin: -1px 11px 0 10px;
  padding: 17px 14px;
  border: 1px solid #d9d9d9;
  background: #fff;
}
.dlg-cols {
  display: flex;
  gap: 16px;
}
fieldset {
  width: 189px;
  height: 424px;
  margin: 0;
  padding: 12px 13px 0 14px;
  border: 1px solid #dcdcdc;
}
legend {
  margin-left: -7px;
  padding: 0 2px;
}
.field-label {
  display: block;
}
.line-styles {
  height: 212px;
  margin: 5px 0 21px;
  padding: 5px 2px 0 27px;
  border: 1px solid #828790;
  list-style: none;
}
.line-styles .focus {
  width: 67px;
  height: 26px;
  margin: 124px 0 0 auto;
  border: 1px dotted #777;
}
.color-box {
  position: relative;
  height: 37px;
  margin-top: 6px;
}
.color-box select {
  appearance: none;
  width: 100%;
  height: 37px;
  border: 1px solid #adadad;
  border-radius: 0;
  background: #fff;
}
.color-box span {
  position: absolute;
  top: 2px;
  right: 2px;
  display: flex;
  align-items: center;
  justify-content: center;
  width: 26px;
  height: 33px;
  border: 1px solid #adadad;
  background: #e1e1e1;
  pointer-events: none;
}
.borders {
  width: 398px;
}
.borders h3 {
  display: flex;
  align-items: center;
  gap: 6px;
}
.borders h3::after {
  content: "";
  flex: 1;
  border-top: 1px solid #dcdcdc;
}
.borders button {
  display: flex;
  align-items: center;
  justify-content: center;
  width: 38px;
  height: 40px;
  padding-right: 2px;
  border: 1px solid #adadad;
  background: #e1e1e1;
}
.borders .on {
  border-color: #005499;
  background: #cce4f7;
}
.borders .focused {
  border: 2px solid #0078d7;
  outline: 1px dotted #000;
  outline-offset: -3px;
}
.presets {
  display: flex;
  gap: 17px;
  margin: 13px 0 15px 71px;
}
.presets > div {
  display: flex;
  flex-direction: column;
  align-items: center;
  gap: 7px;
  width: 79px;
  white-space: nowrap;
}
.presets button {
  width: 79px;
  height: 70px;
  padding-right: 4px;
}
.presets .off {
  color: #838383;
}
.editor {
  display: grid;
  grid-template-columns: 38px 273px 38px;
  gap: 7px 16px;
  margin: 12px 0 0 16px;
}
.side {
  display: flex;
  flex-direction: column;
  justify-content: space-between;
  padding: 1px 0;
}
.preview {
  position: relative;
  grid-column: 2 / 4;
  width: 273px;
  height: 180px;
  padding: 4px 2px 0 0;
  border: 1px solid #828790;
  line-height: 176px;
  text-align: center;
}
.preview svg {
  position: absolute;
  left: 0;
  top: 0;
}
.bottom {
  display: flex;
  justify-content: space-between;
  padding: 0 1px;
}
.dlg-page p {
  margin-top: 24px;
}
.dlg-foot {
  display: flex;
  justify-content: flex-end;
  gap: 16px;
  padding: 16px 11px 14px;
}
.dlg-foot button {
  width: 124px;
  height: 41px;
  border: 1px solid #adadad;
  background: #e1e1e1;
}
.dlg-foot .ok {
  border: 2px solid #0078d7;
}

/* overlays */
.smudge {
  position: absolute;
  top: 0;
  right: 225px;
  z-index: 2;
}
.meter {
  position: absolute;
  right: 0;
  top: 634px;
  z-index: 2;
  display: flex;
  flex-direction: column;
  gap: 1px;
  width: 15px;
  height: 89px;
  padding: 11px 3px 0 4px;
  border: 1px solid #333845;
  border-radius: 6px 0 0 6px;
  background: #4e5565;
}
.meter i {
  height: 2px;
  background: #2b303b;
}
.meter .y {
  background: #d8c84e;
}
.meter .g {
  background: #9ac96c;
}
.meter .t {
  background: #52c8a8;
}
.watermark {
  position: absolute;
  right: 102px;
  top: 873px;
  z-index: 3;
  width: 346px;
  pointer-events: none;
  opacity: 0.75;
  color: #fff;
  text-shadow: 0 0 3px #999;
}
.wm-logo {
  display: flex;
  align-items: flex-end;
  height: 112px;
}
.bai {
  width: 116px;
  font: bold 76px/70px "Liberation Sans", sans-serif;
}
.jy {
  font-size: 60px;
  font-weight: 900;
  line-height: 62px;
}
.du {
  font: 50px "Liberation Sans", sans-serif;
  fill: #fff;
  stroke: #bbb;
  stroke-width: 2px;
  text-anchor: middle;
}
.wm-url {
  font-size: 38px;
  line-height: 52px;
  text-align: center;
}
```
